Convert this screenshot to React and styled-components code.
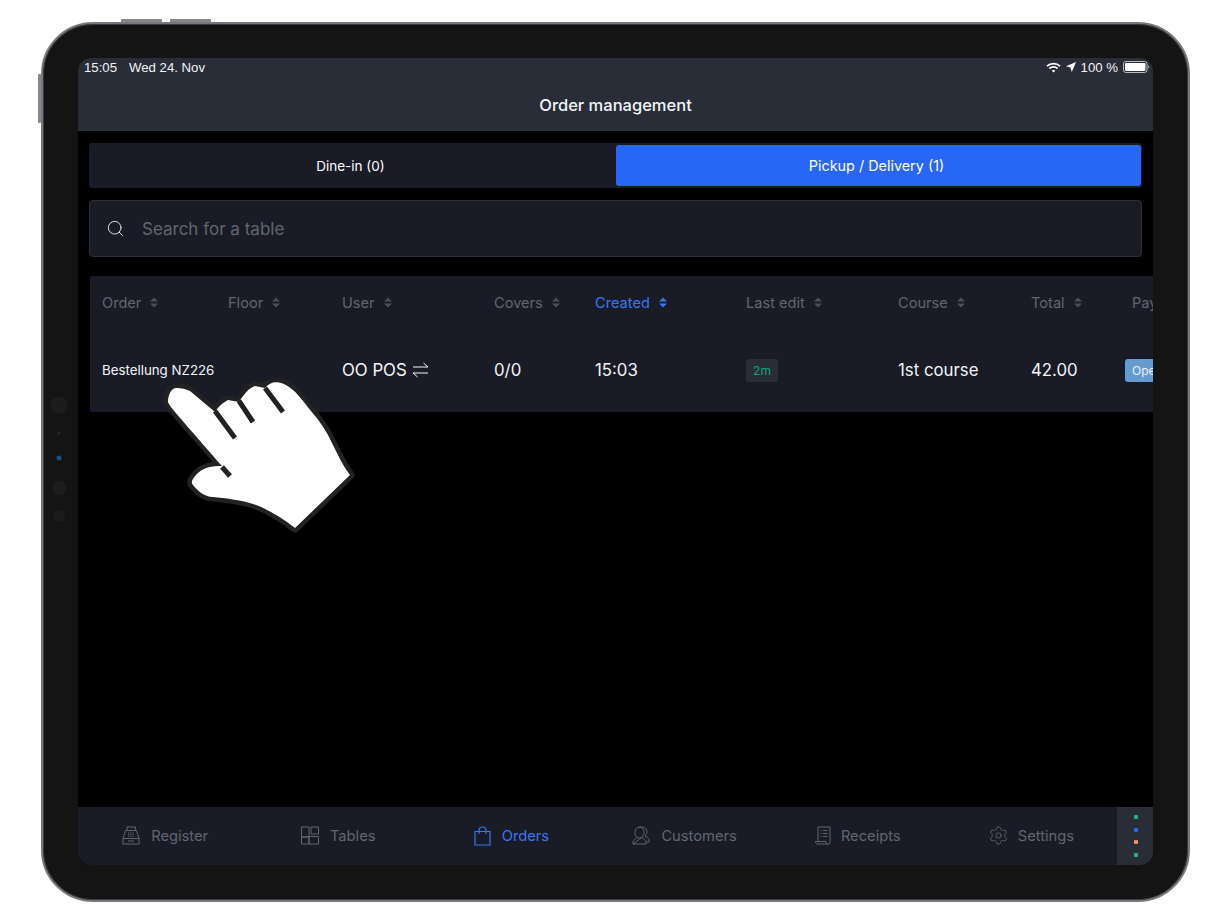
import React from "react";
import styled, { createGlobalStyle } from "styled-components";
import { Search, Settings } from "lucide-react";

const GlobalStyle = createGlobalStyle`
  html, body {
    margin: 0;
    padding: 0;
    background: #fff;
    font-family: "Inter", "Liberation Sans", sans-serif;
  }
`;

const Page = styled.div`
  position: relative;
  width: 1231px;
  height: 923px;
  padding: 22px 0 0 41px;
  box-sizing: border-box;
  overflow: hidden;
`;

const Device = styled.div`
  position: relative;
  width: 1149px;
  height: 880px;
  box-sizing: border-box;
  padding: 34px 35px 34px 35px;
  background: #141414;
  border: 2px solid #76787d;
  border-radius: 52px;
  box-shadow: inset 0 0 0 1px #3a3a3c;
`;

const HwButton = styled.span`
  position: absolute;
  background: #85878c;
  border-radius: 1px;
  top: ${(p) => p.$top}px;
  left: ${(p) => p.$left}px;
  width: ${(p) => p.$w}px;
  height: ${(p) => p.$h}px;
`;

const Lens = styled.span`
  position: absolute;
  left: 59px;
  top: ${(p) => p.$y}px;
  width: ${(p) => p.$size}px;
  height: ${(p) => p.$size}px;
  transform: translate(-50%, -50%);
  border-radius: 50%;
  background: ${(p) => p.$color};
`;

const Screen = styled.div`
  width: 1075px;
  height: 807px;
  background: #000;
  border-radius: 13px;
  overflow: hidden;
  display: flex;
  flex-direction: column;
  color: #fff;
`;

const TopBar = styled.header`
  height: 73px;
  flex: none;
  background: #292d38;
  display: flex;
  flex-direction: column;
`;

const StatusBar = styled.div`
  height: 20px;
  box-sizing: border-box;
  padding: 0 3px 2px 6px;
  display: flex;
  align-items: center;
  justify-content: space-between;
  font-family: "Liberation Sans", sans-serif;
  font-size: 13.2px;
  color: #f2f3f5;
`;

const StatusGroup = styled.div`
  display: flex;
  align-items: center;
  gap: ${(p) => p.$gap}px;
`;

const Title = styled.h1`
  margin: 0;
  flex: 1;
  display: flex;
  align-items: center;
  justify-content: center;
  font-size: 16.5px;
  font-weight: 500;
  color: #f4f5f6;
`;

const Content = styled.main`
  flex: 1;
  padding: 12px 0 0 11px;
  display: flex;
  flex-direction: column;
`;

const Tabs = styled.div`
  width: 1053px;
  height: 45px;
  box-sizing: border-box;
  padding: 2px 1px 2px 0;
  background: #191c26;
  border-radius: 3px;
  display: grid;
  grid-template-columns: 527px 525px;
`;

const Tab = styled.div`
  display: flex;
  align-items: center;
  justify-content: center;
  padding-right: 4px;
  border-radius: 3px;
  color: #fff;
  font-size: ${(p) => (p.$active ? 14.4 : 13.5)}px;
  background: ${(p) => (p.$active ? "#2766f6" : "transparent")};
`;

const SearchBox = styled.div`
  width: 1053px;
  height: 57px;
  margin-top: 12px;
  box-sizing: border-box;
  padding-left: 16px;
  background: #191c26;
  border: 1px solid #2e313b;
  border-radius: 4px;
  display: flex;
  align-items: center;
  gap: 17px;
  font-size: 17px;
  color: #62656e;

  svg {
    color: #e8e9eb;
  }
`;

const Table = styled.section`
  width: 1063px;
  height: 136px;
  margin: 19px 0 0 1px;
  padding-left: 12px;
  box-sizing: border-box;
  background: #191c26;
  border-radius: 3px 0 0 3px;
  display: grid;
  grid-template-columns: 126px 114px 152px 101px 151px 152px 133px 101px 80px;
  grid-template-rows: 52px 84px;
  overflow: hidden;
`;

const HeadCell = styled.div`
  display: flex;
  align-items: center;
  gap: 9px;
  padding-top: 1px;
  font-size: 14.6px;
  white-space: nowrap;
  color: ${(p) => (p.$active ? "#3a75f5" : "#62656e")};
`;

const Cell = styled.div`
  display: flex;
  align-items: center;
  gap: 5px;
  font-size: ${(p) => (p.$small ? 13.3 : 16.8)}px;
  white-space: nowrap;
  color: #f4f5f6;
`;

const TimeBadge = styled.span`
  width: 32px;
  height: 23px;
  display: flex;
  align-items: center;
  justify-content: center;
  font-size: 12px;
  color: #0ea47a;
  background: #292d38;
  border-radius: 3px;
`;

const StateBadge = styled.span`
  width: 60px;
  height: 23px;
  margin-left: -7px;
  box-sizing: border-box;
  padding-left: 7px;
  display: flex;
  align-items: center;
  font-size: 12px;
  color: #e9f0f8;
  background: #669bd0;
  border-radius: 3px;
`;

const Spacer = styled.div`
  flex: 1;
`;

const BottomNav = styled.nav`
  height: 58px;
  flex: none;
  display: flex;
  background: #191c26;
`;

const NavItems = styled.div`
  flex: 1;
  display: grid;
  grid-template-columns: repeat(6, 1fr);
`;

const NavItem = styled.div`
  display: flex;
  align-items: center;
  justify-content: center;
  gap: ${(p) => p.$gap}px;
  padding: 0 0 1px 1px;
  font-size: 14.7px;
  color: ${(p) => (p.$active ? "#3a75f5" : "#62656e")};
`;

const Dots = styled.div`
  width: 36px;
  flex: none;
  box-sizing: border-box;
  padding-left: 2px;
  background: #292d38;
  display: flex;
  flex-direction: column;
  align-items: center;
  justify-content: center;
  gap: 8.7px;
`;

const Dot = styled.span`
  width: 4px;
  height: 4px;
  border-radius: 1px;
  background: ${(p) => p.$color};
`;

const Hand = styled.svg`
  position: absolute;
  left: 150px;
  top: 370px;
  width: 220px;
  height: 170px;
`;

const SortIcon = ({ active }) => (
  <svg width="8" height="11" viewBox="0 0 8 11">
    <path d="M4 0.5 8 4.5H0Z" fill={active ? "#3a75f5" : "#4c4f58"} />
    <path d="M0 6.5H8L4 10.5Z" fill={active ? "#3a75f5" : "#4c4f58"} />
  </svg>
);

const SwapIcon = () => (
  <svg width="17" height="16" viewBox="0 0 17 16" fill="none" stroke="#f4f5f6" strokeWidth="1">
    <path d="M1 5H16L11.5 1" />
    <path d="M16 11H1L5.5 15" />
  </svg>
);

const RegisterIcon = () => (
  <svg width="18" height="19" viewBox="0 0 18 19" fill="none" stroke="currentColor" strokeWidth="1">
    <path d="M5 1H13.5V4.5H5Z" />
    <path d="M3.5 4.5H14.5L17 12.5H1Z" />
    <path d="M1 12.5H17V18H1Z" />
    <path d="M6 15H12" />
    <path d="M6 7H12M6 8.7H12M6 10.4H12" strokeDasharray="1.2 1" />
  </svg>
);

const TablesIcon = () => (
  <svg width="18" height="19" viewBox="0 0 18 19" fill="none" stroke="currentColor" strokeWidth="1">
    <path d="M0.5 1H8V11H0.5Z" />
    <path d="M10 1H17.5V8H10Z" />
    <path d="M0.5 11H8V18H0.5Z" />
    <path d="M8 10.5H17.5V18H8Z" />
  </svg>
);

const BagIcon = () => (
  <svg width="17" height="20" viewBox="0 0 17 20" fill="none" stroke="currentColor" strokeWidth="1.2">
    <path d="M1 5.5H16V19H1Z" />
    <path d="M5 8V4.5C5 2.3 6.4 1 8.5 1S12 2.3 12 4.5V8" />
  </svg>
);

const CustomersIcon = () => (
  <svg width="18" height="19" viewBox="0 0 18 19" fill="none" stroke="currentColor" strokeWidth="1">
    <ellipse cx="7.5" cy="6.5" rx="4.6" ry="5.5" />
    <path d="M1 18V15.5C1 14 3 13.2 5.3 11.5M9.7 11.5C12 13.2 14 14 14 15.5V18H1Z" />
    <path d="M6.5 2.2C7.5 1.2 9 0.8 10.5 1C13.5 1.4 15.2 3.6 15 6.2C14.9 8 14 9.4 13 10.2C14.5 11 17 12.2 17 13.7V16H14" />
  </svg>
);

const ReceiptIcon = () => (
  <svg width="16" height="19" viewBox="0 0 16 19" fill="none" stroke="currentColor" strokeWidth="1">
    <path d="M3 15.5V1H15V16.5C15 17.5 14.3 18 13.5 18H2.5C1.3 18 0.5 17.2 0.5 16.2V15.5H11V16.5C11 17.4 12 18 13.5 18" />
    <path d="M5.5 4.5H6.5M8 4.5H12.5M5.5 7.5H6.5M8 7.5H12.5M5.5 10.5H6.5M8 10.5H12.5" />
  </svg>
);

const Wifi = () => (
  <svg width="15" height="11" viewBox="0 0 15 11" fill="none" stroke="#fff" strokeWidth="1.7">
    <path d="M1 4.2C4.6 0.8 10.4 0.8 14 4.2" />
    <path d="M3.4 6.5C5.7 4.4 9.3 4.4 11.6 6.5" />
    <path d="M7.5 10.5 5.6 8.6C6.7 7.7 8.3 7.7 9.4 8.6Z" fill="#fff" stroke="none" />
  </svg>
);

const LocationArrow = () => (
  <svg width="10" height="10" viewBox="0 0 10 10">
    <path d="M10 0 5.8 10 4.4 5.6 0 4.2Z" fill="#fff" />
  </svg>
);

const Battery = () => (
  <svg width="27" height="12" viewBox="0 0 27 12">
    <rect x="0.5" y="0.5" width="23.5" height="11" rx="2.5" fill="none" stroke="#b9bbc0" />
    <rect x="2" y="2" width="20.5" height="8" rx="1.2" fill="#fff" />
    <path d="M25.2 4.2C26 4.5 26.4 5.2 26.4 6S26 7.5 25.2 7.8Z" fill="#9a9ca2" />
  </svg>
);

const columns = [
  { label: "Order" },
  { label: "Floor" },
  { label: "User" },
  { label: "Covers" },
  { label: "Created", active: true },
  { label: "Last edit" },
  { label: "Course" },
  { label: "Total" },
  { label: "Payment" },
];

const navItems = [
  { label: "Register", icon: <RegisterIcon />, gap: 11 },
  { label: "Tables", icon: <TablesIcon />, gap: 11 },
  { label: "Orders", icon: <BagIcon />, gap: 11, active: true },
  { label: "Customers", icon: <CustomersIcon />, gap: 11 },
  { label: "Receipts", icon: <ReceiptIcon />, gap: 10 },
  { label: "Settings", icon: <Settings size={21} strokeWidth={1} />, gap: 9 },
];

function App() {
  return (
    <Page>
      <GlobalStyle />
      <HwButton $top={19} $left={121} $w={41} $h={4} />
      <HwButton $top={19} $left={170} $w={41} $h={4} />
      <HwButton $top={74} $left={38} $w={3} $h={49} />
      <Device>
        <Screen>
          <TopBar>
            <StatusBar>
              <StatusGroup $gap={12}>
                <span>15:05</span>
                <span>Wed 24. Nov</span>
              </StatusGroup>
              <StatusGroup $gap={5}>
                <Wifi />
                <LocationArrow />
                <span>100 %</span>
                <Battery />
              </StatusGroup>
            </StatusBar>
            <Title>Order management</Title>
          </TopBar>
          <Content>
            <Tabs>
              <Tab>Dine-in (0)</Tab>
              <Tab $active>Pickup / Delivery (1)</Tab>
            </Tabs>
            <SearchBox>
              <Search size={19} strokeWidth={1.2} />
              <span>Search for a table</span>
            </SearchBox>
            <Table>
              {columns.map((col) => (
                <HeadCell key={col.label} $active={col.active}>
                  {col.label}
                  <SortIcon active={col.active} />
                </HeadCell>
              ))}
              <Cell $small>Bestellung NZ226</Cell>
              <Cell />
              <Cell>
                OO POS <SwapIcon />
              </Cell>
              <Cell>0/0</Cell>
              <Cell>15:03</Cell>
              <Cell>
                <TimeBadge>2m</TimeBadge>
              </Cell>
              <Cell>1st course</Cell>
              <Cell>42.00</Cell>
              <Cell>
                <StateBadge>Open</StateBadge>
              </Cell>
            </Table>
            <Spacer />
          </Content>
          <BottomNav>
            <NavItems>
              {navItems.map((item) => (
                <NavItem key={item.label} $active={item.active} $gap={item.gap}>
                  {item.icon}
                  {item.label}
                </NavItem>
              ))}
            </NavItems>
            <Dots>
              <Dot $color="#22b07d" />
              <Dot $color="#2766f6" />
              <Dot $color="#f0925a" />
              <Dot $color="#22b07d" />
            </Dots>
          </BottomNav>
        </Screen>
      </Device>
      <Lens $y={405} $size={17} $color="#1c1c1c" />
      <Lens $y={433} $size={3} $color="#262626" />
      <Lens $y={458} $size={5} $color="#15508f" />
      <Lens $y={488} $size={15} $color="#1c1c1c" />
      <Lens $y={516} $size={12} $color="#1c1c1c" />
      <Hand viewBox="150 370 220 170">
        <path
          d="M177 388C172 387 168 394 168 402C170 407 176 413 222 466C212 466 204 467 198 473C193 478 190 482 193 485C197 490 204 497 213 497C225 498 240 500 253 504C268 509 282 518 295 528L350 475C343 466 338 455 332 443C327 432 320 421 311 411C303 401 295 389 284 384C276 381 270 382 265 388L255 386C249 388 244 394 239 402L228 400C222 403 218 407 215 412L190 391C186 389 181 388 177 388Z"
          fill="#fff"
          stroke="#222"
          strokeWidth="9"
          strokeLinejoin="round"
          paintOrder="stroke"
        />
        <path
          d="M265 388 283 412M239 401 253 422M215 411 235 438M222 467 230 476"
          fill="none"
          stroke="#222"
          strokeWidth="5"
        />
      </Hand>
    </Page>
  );
}

export default App;
